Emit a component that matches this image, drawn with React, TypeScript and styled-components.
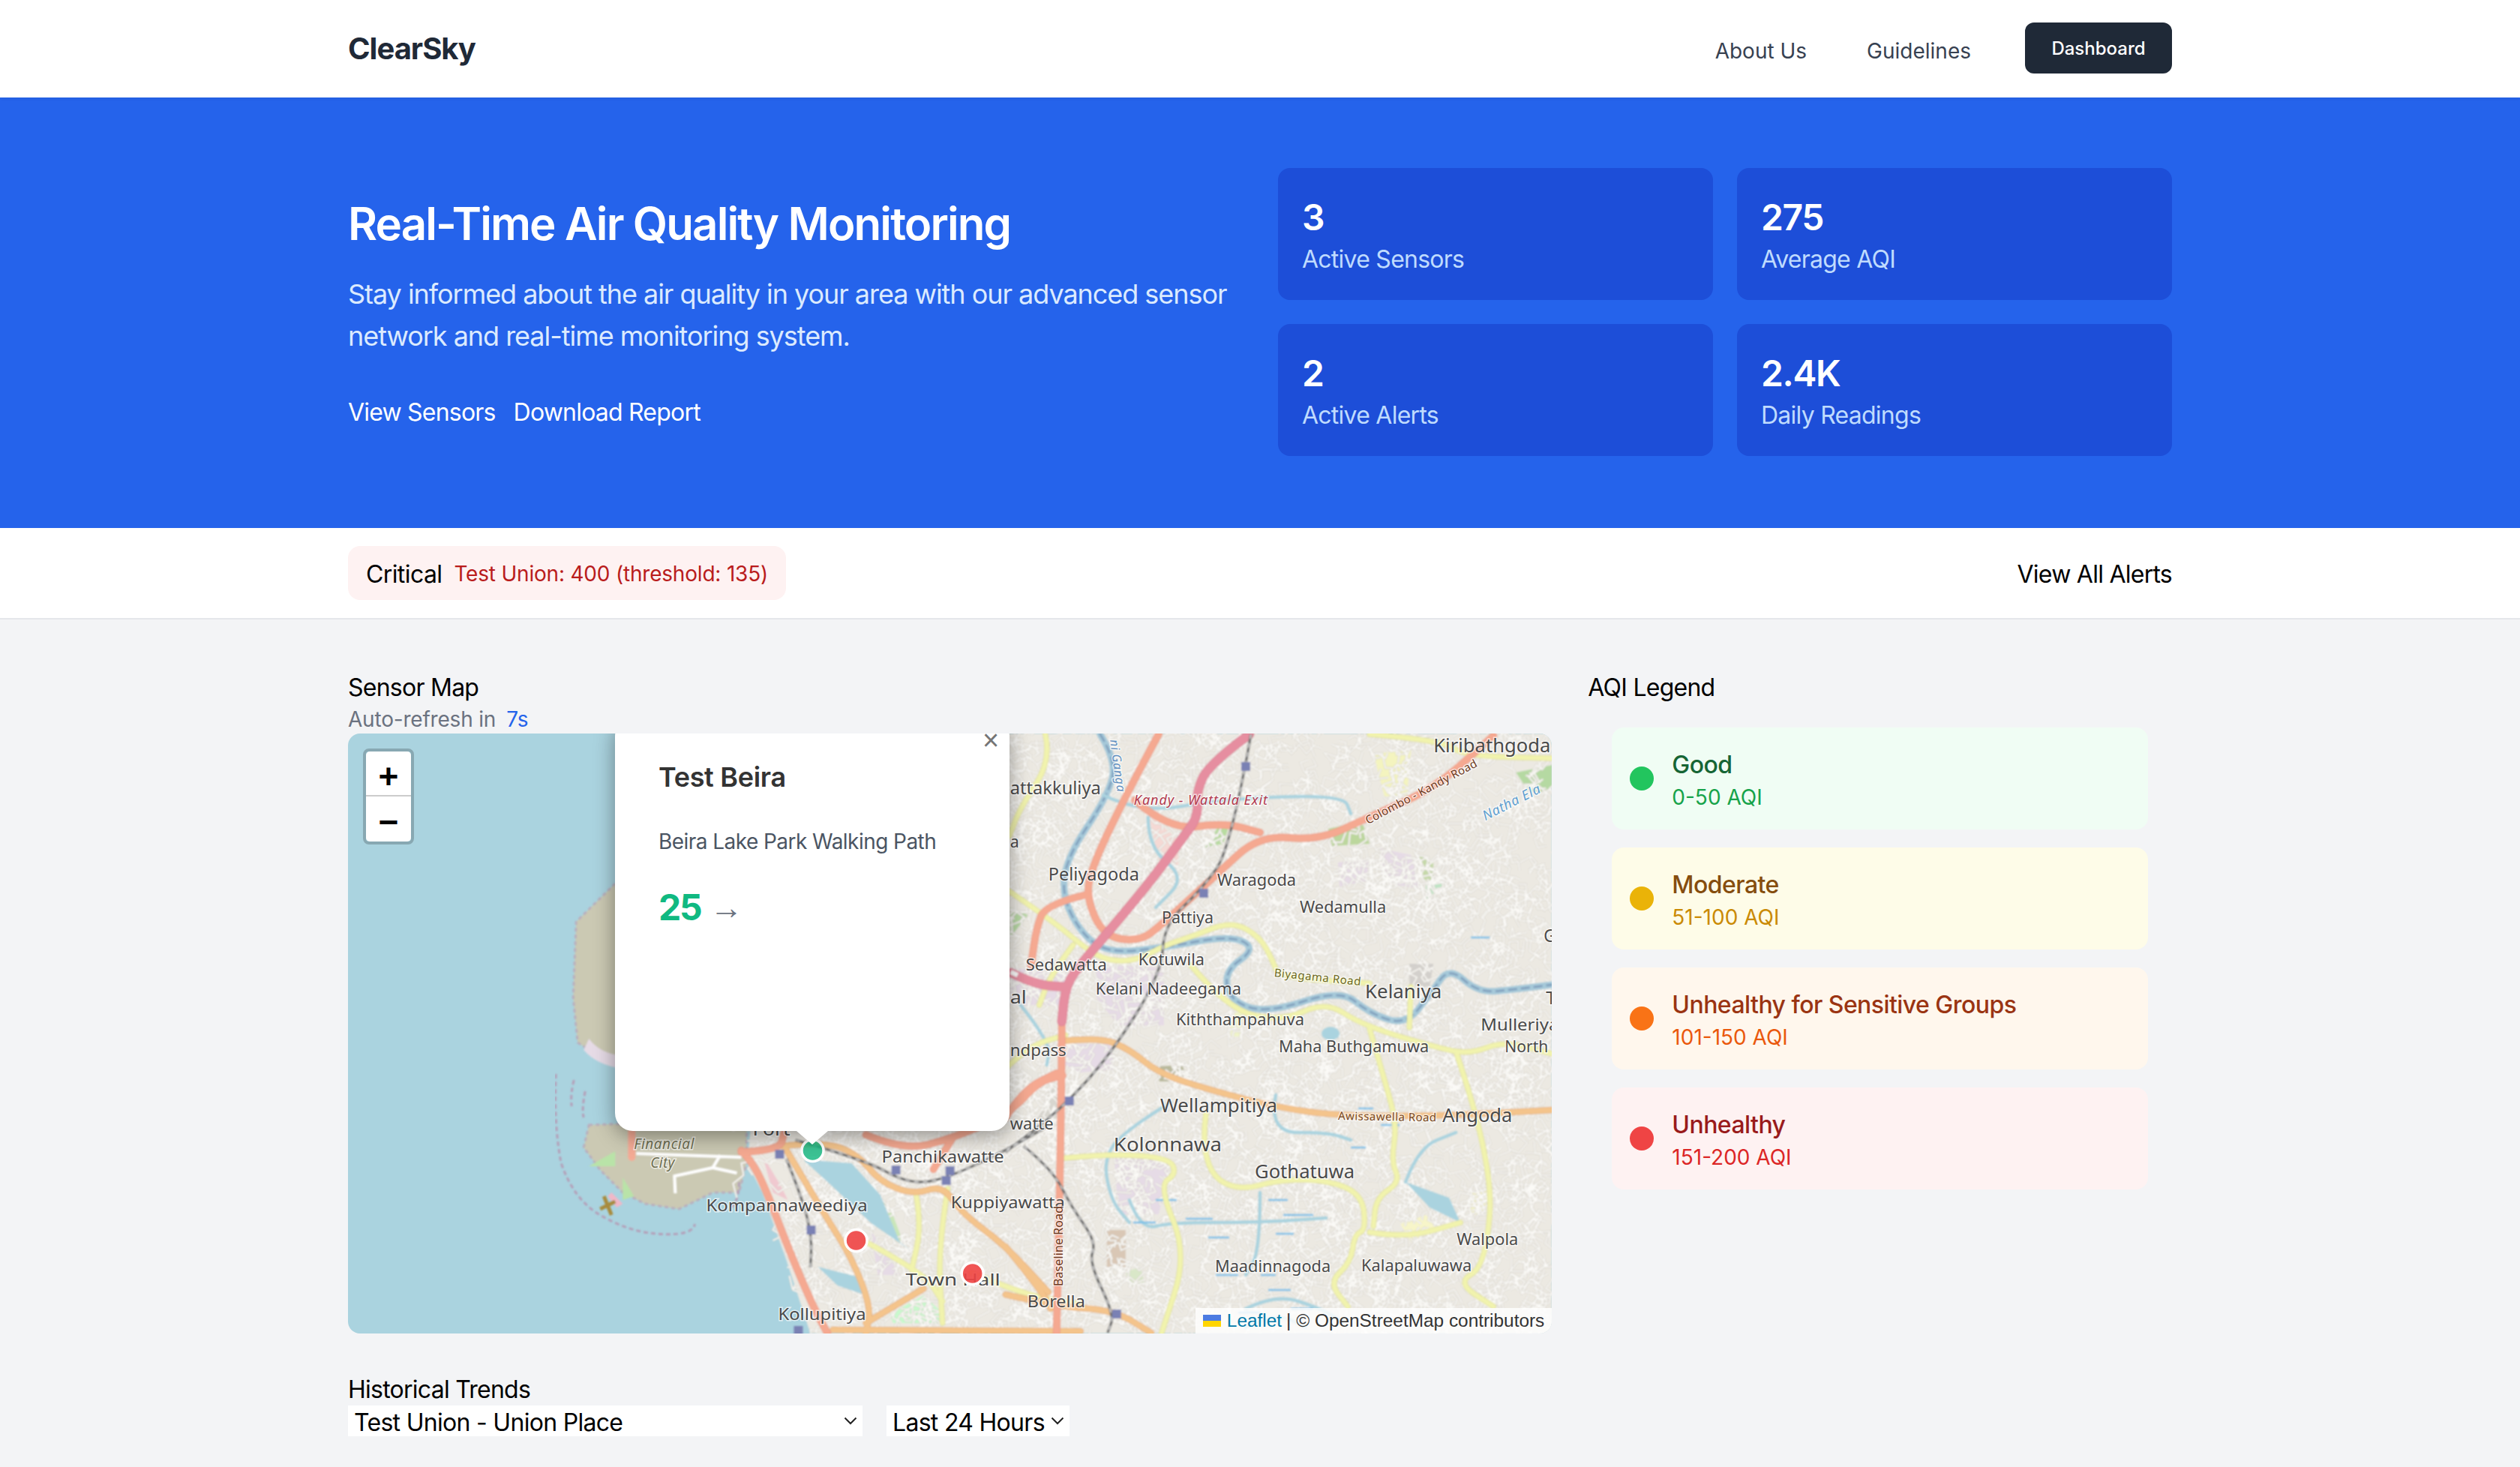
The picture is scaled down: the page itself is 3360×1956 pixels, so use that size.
import React from "react";
import styled, { createGlobalStyle } from "styled-components";

type Pt = [number, number];

const GlobalStyle = createGlobalStyle`
  html, body {
    margin: 0;
    padding: 0;
    background: #f3f4f6;
    color: #000;
    font-family: Inter, "Liberation Sans", sans-serif;
    overflow: hidden;
  }
  * { box-sizing: border-box; }
`;

const Nav = styled.nav`
  position: relative;
  z-index: 5;
  height: 130px;
  background: #fff;
  box-shadow: 0 2px 4px rgba(0, 0, 0, 0.05);
`;
const Container = styled.div`
  width: 2432px;
  margin: 0 auto;
`;
const NavInner = styled(Container)`
  height: 128px;
  display: flex;
  align-items: center;
  justify-content: space-between;
`;
const Logo = styled.div`
  font-size: 40px;
  font-weight: 700;
  letter-spacing: -1px;
  color: #1f2937;
`;
const NavLinks = styled.div`
  display: flex;
  align-items: center;
`;
const NavLink = styled.a`
  font-size: 28px;
  font-weight: 400;
  color: #374151;
  margin-right: 80px;
  padding-top: 8px;
  &:nth-child(2) { margin-right: 72px; }
`;
const DashboardButton = styled.button`
  width: 196px;
  height: 68px;
  border: 0;
  border-radius: 12px;
  background: #1f2937;
  color: #fff;
  font-family: inherit;
  font-size: 24px;
  font-weight: 500;
`;

const Hero = styled.section`
  background: #2563eb;
  padding: 94px 0 96px;
`;
const HeroGrid = styled(Container)`
  display: grid;
  grid-template-columns: 1fr 1fr;
  gap: 48px;
  align-items: center;
`;
const HeroTitle = styled.h1`
  margin: 0 0 32px;
  padding-top: 4px;
  font-size: 60px;
  line-height: 68px;
  font-weight: 600;
  letter-spacing: -1.9px;
  color: #fff;
`;
const HeroText = styled.p`
  margin: 0 0 48px;
  font-size: 36px;
  line-height: 56px;
  letter-spacing: -1.04px;
  color: #dbeafe;
`;
const HeroLinks = styled.div`
  display: flex;
  gap: 24px;
  padding-top: 4px;
  font-size: 32px;
  line-height: 44px;
  letter-spacing: -0.8px;
  color: #fff;
`;
const StatGrid = styled.div`
  display: grid;
  grid-template-columns: 580px 580px;
  gap: 32px;
`;
const StatCard = styled.div`
  height: 176px;
  padding: 32px;
  border-radius: 16px;
  background: #1d4ed8;
`;
const StatValue = styled.div`
  padding-top: 4px;
  font-size: 48px;
  line-height: 60px;
  font-weight: 600;
  letter-spacing: -1.4px;
  color: #fff;
`;
const StatLabel = styled.div`
  padding-top: 4px;
  font-size: 32px;
  line-height: 44px;
  letter-spacing: -0.75px;
  color: #bfdbfe;
`;

const AlertBar = styled.div`
  background: #fff;
  border-bottom: 2px solid #e5e7eb;
  padding: 24px 0;
`;
const AlertInner = styled(Container)`
  display: flex;
  align-items: center;
  justify-content: space-between;
`;
const AlertChip = styled.div`
  display: flex;
  align-items: center;
  gap: 16px;
  height: 72px;
  padding: 2px 24px 0;
  border-radius: 16px;
  background: #fef2f2;
`;
const AlertLevel = styled.span`
  font-size: 32px;
  letter-spacing: -0.6px;
  color: #000;
`;
const AlertMessage = styled.span`
  font-size: 28px;
  letter-spacing: -0.2px;
  color: #b91c1c;
`;
const AlertLink = styled.a`
  padding-top: 2px;
  font-size: 32px;
  letter-spacing: -0.75px;
  color: #000;
`;

const Main = styled(Container)`
  padding-top: 64px;
`;
const TopGrid = styled.div`
  display: grid;
  grid-template-columns: repeat(3, 1fr);
  gap: 48px;
`;
const MapColumn = styled.div`
  grid-column: span 2;
`;
const SectionTitle = styled.h2`
  margin: 0;
  padding-top: 5px;
  font-size: 32px;
  line-height: 43px;
  font-weight: 400;
  letter-spacing: -0.75px;
  color: #000;
`;
const RefreshLine = styled.div`
  padding-top: 2px;
  font-size: 28px;
  line-height: 38px;
  letter-spacing: -0.2px;
  color: #6b7280;
`;
const RefreshCount = styled.span`
  margin-left: 14px;
  color: #2563eb;
`;

const MapBox = styled.div`
  position: relative;
  height: 800px;
  border-radius: 16px;
  overflow: hidden;
  background: #aad3df;
`;
const MapSvg = styled.svg`
  display: block;
  width: 100%;
  height: 100%;
`;
const MapLabel = styled.text<{ $tone?: string }>`
  font-family: "Noto Sans", sans-serif;
  fill: ${({ $tone }) => $tone || "#4a4a4a"};
  stroke: rgba(255, 255, 255, 0.65);
  stroke-width: 3px;
  paint-order: stroke;
  dominant-baseline: central;
`;
const ZoomControl = styled.div`
  position: absolute;
  left: 20px;
  top: 20px;
  width: 68px;
  border: 4px solid rgba(0, 0, 0, 0.2);
  border-radius: 8px;
  background-clip: padding-box;
`;
const ZoomButton = styled.div<{ $last?: boolean }>`
  height: 60px;
  padding-top: 8px;
  display: flex;
  align-items: center;
  justify-content: center;
  background: #fff;
  color: #000;
  font-family: "Liberation Sans", sans-serif;
  font-size: 46px;
  font-weight: 700;
  border-radius: ${({ $last }) => ($last ? "0 0 5px 5px" : "5px 5px 0 0")};
  border-bottom: ${({ $last }) => ($last ? "0" : "2px solid #ccc")};
`;
const Popup = styled.div`
  position: absolute;
  left: 356px;
  top: -20px;
  width: 526px;
  height: 550px;
  padding: 20px 40px 0 58px;
  background: #fff;
  border-radius: 24px;
  box-shadow: 0 6px 28px rgba(0, 0, 0, 0.4);
`;
const PopupClose = styled.div`
  position: absolute;
  right: 10px;
  top: 11px;
  width: 30px;
  text-align: center;
  font-family: "Liberation Sans", sans-serif;
  font-size: 38px;
  line-height: 36px;
  font-weight: 400;
  color: #757575;
`;
const PopupTip = styled.div`
  position: absolute;
  left: 242px;
  bottom: -18px;
  width: 0;
  height: 0;
  border-left: 21px solid transparent;
  border-right: 21px solid transparent;
  border-top: 18px solid #fff;
`;
const PopupTitle = styled.div`
  margin-top: 30px;
  font-size: 36px;
  line-height: 56px;
  font-weight: 600;
  letter-spacing: -0.3px;
  color: #333;
`;
const PopupPlace = styled.div`
  margin-top: 38px;
  font-size: 28px;
  line-height: 40px;
  letter-spacing: -0.55px;
  color: #4b5563;
`;
const PopupReading = styled.div`
  margin-top: 40px;
  display: flex;
  align-items: center;
  gap: 12px;
`;
const PopupValue = styled.span`
  font-size: 48px;
  line-height: 56px;
  font-weight: 700;
  letter-spacing: -2.2px;
  color: #10b981;
`;
const PopupArrow = styled.span`
  font-family: "Liberation Sans", sans-serif;
  font-size: 44px;
  line-height: 56px;
  color: #6b7280;
`;
const Attribution = styled.div`
  position: absolute;
  right: 0;
  bottom: 0;
  height: 34px;
  padding: 0 10px;
  display: flex;
  align-items: center;
  gap: 6px;
  background: rgba(255, 255, 255, 0.8);
  font-family: "Liberation Sans", sans-serif;
  font-size: 24.4px;
  color: #333;
`;
const AttributionLink = styled.a`
  color: #0078a8;
`;
const FlagIcon = styled.svg`
  display: block;
  margin-right: 2px;
`;

const LegendList = styled.div`
  margin: 32px 32px 0;
  display: flex;
  flex-direction: column;
  gap: 24px;
`;
const LegendItem = styled.div<{ $bg: string }>`
  height: 136px;
  padding: 24px;
  display: flex;
  align-items: center;
  gap: 24px;
  border-radius: 16px;
  background: ${({ $bg }) => $bg};
`;
const LegendDot = styled.span<{ $color: string }>`
  width: 32px;
  height: 32px;
  border-radius: 50%;
  background: ${({ $color }) => $color};
`;
const LegendName = styled.div<{ $color: string }>`
  padding-top: 3px;
  font-size: 32px;
  line-height: 45px;
  font-weight: 500;
  letter-spacing: -0.55px;
  color: ${({ $color }) => $color};
`;
const LegendRange = styled.div<{ $color: string }>`
  padding-top: 2px;
  font-size: 28px;
  line-height: 38px;
  color: ${({ $color }) => $color};
`;

const TrendsSection = styled.section`
  margin-top: 48px;
`;
const SelectRow = styled.div`
  display: flex;
  gap: 32px;
`;
const SelectWrap = styled.div<{ $width: number }>`
  position: relative;
  width: ${({ $width }) => $width}px;
  height: 41px;
`;
const Select = styled.select`
  appearance: none;
  display: block;
  width: 100%;
  height: 100%;
  padding: 3px 0 0 8px;
  border: 0;
  border-radius: 0;
  background: #fff;
  color: #000;
  font-family: inherit;
  font-size: 32px;
  letter-spacing: -0.7px;
`;
const SelectChevron = styled.svg`
  position: absolute;
  right: 7px;
  top: 15px;
  pointer-events: none;
`;

// smooth line through points, used for all the map roads
function smooth(pts: Pt[]): string {
  let d = `M${pts[0][0]} ${pts[0][1]}`;
  for (let i = 1; i < pts.length - 1; i++) {
    const mx = (pts[i][0] + pts[i + 1][0]) / 2;
    const my = (pts[i][1] + pts[i + 1][1]) / 2;
    d += `Q${pts[i][0]} ${pts[i][1]} ${mx} ${my}`;
  }
  const last = pts[pts.length - 1];
  return d + `L${last[0]} ${last[1]}`;
}

function poly(pts: Pt[]): string {
  return pts.map(p => p.join(",")).join(" ");
}

function coastX(y: number): number {
  const c: Pt[] = [[1480, 1000], [1551, 996], [1590, 1016], [1680, 1048], [1778, 1080]];
  if (y < c[0][0]) return 1000;
  for (let i = 0; i < c.length - 1; i++) {
    if (y <= c[i + 1][0]) {
      const t = (y - c[i][0]) / (c[i + 1][0] - c[i][0]);
      return c[i][1] + t * (c[i + 1][1] - c[i][1]);
    }
  }
  return 1080;
}

// fine street texture of the tiles
function buildStreets(): string {
  let seed = 91823;
  const rnd = () => {
    seed = (seed + 0x6d2b79f5) | 0;
    let t = Math.imul(seed ^ (seed >>> 15), 1 | seed);
    t = (t + Math.imul(t ^ (t >>> 7), 61 | t)) ^ t;
    return ((t ^ (t >>> 14)) >>> 0) / 4294967296;
  };
  let d = "";
  for (let i = 0; i < 5200; i++) {
    const x = 1000 + rnd() * 1070;
    const y = 978 + rnd() * 800;
    if (x < coastX(y) + 6) continue;
    let a = rnd() * Math.PI * 2;
    let px = x;
    let py = y;
    d += `M${px.toFixed(0)} ${py.toFixed(0)}`;
    const n = 2 + Math.floor(rnd() * 4);
    for (let j = 0; j < n; j++) {
      const len = 6 + rnd() * 16;
      px += Math.cos(a) * len;
      py += Math.sin(a) * len;
      d += `L${px.toFixed(0)} ${py.toFixed(0)}`;
      a += (rnd() < 0.5 ? 1 : -1) * (Math.PI / 2) * (0.7 + rnd() * 0.4);
    }
  }
  return d;
}
const STREETS = buildStreets();

const LAND: Pt[] = [[830, 978], [2068, 978], [2068, 1778], [1080, 1778], [1048, 1680], [1016, 1590], [996, 1551], [1000, 1508], [840, 1508]];
const PORT: Pt[] = [[820, 1178], [768, 1229], [764, 1330], [770, 1390], [808, 1415], [840, 1420], [840, 1178]];
const PORT_CITY: Pt[] = [[785, 1500], [840, 1498], [995, 1505], [995, 1551], [985, 1590], [950, 1590], [930, 1600], [905, 1612], [860, 1605], [830, 1590], [800, 1560], [778, 1530]];

const LANDUSE: { c: string; p: Pt[] }[] = [
  { c: "#e6dbe6", p: [[1461, 1287], [1551, 1290], [1551, 1367], [1490, 1367], [1461, 1330]] },
  { c: "#e6dbe6", p: [[1418, 1392], [1480, 1392], [1485, 1426], [1440, 1430], [1418, 1420]] },
  { c: "#e6dbe6", p: [[1485, 1544], [1556, 1544], [1556, 1570], [1544, 1619], [1490, 1619]] },
  { c: "#e6dbe6", p: [[1839, 1131], [1880, 1140], [1893, 1185], [1860, 1180], [1839, 1160]] },
  { c: "#e6dbe6", p: [[1783, 1150], [1825, 1145], [1820, 1175], [1785, 1182]] },
  { c: "#e6dbe6", p: [[1346, 1290], [1440, 1300], [1420, 1340], [1346, 1340]] },
  { c: "#e6dbe6", p: [[1160, 1640], [1200, 1700], [1170, 1700]] },
  { c: "#d3d0cc", p: [[1878, 1285], [1910, 1285], [1905, 1316], [1878, 1316]] },
  { c: "#d8d6cf", p: [[1400, 1450], [1420, 1450], [1410, 1490], [1380, 1495]] },
  { c: "#c8facc", p: [[1186, 1752], [1231, 1727], [1253, 1748], [1253, 1764], [1190, 1764]] },
  { c: "#f4f4bf", p: [[1830, 1005], [1880, 1000], [1875, 1060], [1845, 1062]] },
  { c: "#f7f5c9", p: [[1866, 1632], [1900, 1620], [1915, 1640], [1880, 1655]] },
  { c: "#f7f5c9", p: [[1960, 1590], [1985, 1588], [1975, 1620], [1960, 1618]] },
  { c: "#bde5c4", p: [[1900, 1180], [1925, 1178], [1900, 1200]] },
  { c: "#b8dca0", p: [[1625, 1100], [1640, 1095], [1630, 1125], [1605, 1130]] },
  { c: "#bcd79d", p: [[1770, 1105], [1815, 1095], [1825, 1125], [1775, 1128]] },
  { c: "#b5d9a2", p: [[2020, 1030], [2068, 1020], [2068, 1050], [2040, 1060]] },
  { c: "#c5d9a8", p: [[1890, 1140], [1910, 1150], [1910, 1180], [1895, 1170]] },
  { c: "#b8d9a5", p: [[1346, 1210], [1370, 1220], [1346, 1250]] },
  { c: "#b9b99c", p: [[1540, 1422], [1575, 1420], [1585, 1442], [1545, 1442]] },
  { c: "#f5d9d4", p: [[1530, 1085], [1570, 1120], [1570, 1155], [1545, 1150]] },
  { c: "#d9e7c8", p: [[1500, 1695], [1520, 1690], [1525, 1712], [1505, 1715]] },
  { c: "#e8e6e0", p: [[1350, 1420], [1410, 1435], [1370, 1450], [1350, 1450]] },
  { c: "#f0f4c8", p: [[1640, 1350], [1655, 1350], [1655, 1382], [1640, 1382]] },
  { c: "#bde3c2", p: [[1110, 1565], [1128, 1575], [1120, 1590]] },
  { c: "#f0c9d0", p: [[1016, 1540], [1040, 1580], [1050, 1600], [1030, 1590]] },
  { c: "#c9e6b9", p: [[1170, 1590], [1190, 1620], [1205, 1660], [1185, 1650]] },
  { c: "#d9c7b5", p: [[1475, 1640], [1500, 1640], [1500, 1690], [1475, 1690]] },
];

const WATER: Pt[][] = [
  [[1084, 1547], [1135, 1551], [1173, 1593], [1199, 1656], [1215, 1668], [1161, 1631], [1103, 1576], [1071, 1547]],
  [[1090, 1689], [1142, 1702], [1154, 1727], [1116, 1714]],
  [[1873, 1576], [1931, 1597], [1946, 1630], [1905, 1610]],
];
const RIVERS: Pt[][] = [
  [[1466, 979], [1488, 1014], [1476, 1062], [1422, 1142], [1415, 1196], [1444, 1249], [1481, 1271], [1553, 1263], [1641, 1247], [1674, 1265], [1631, 1295], [1640, 1335], [1689, 1351], [1786, 1319], [1825, 1351], [1873, 1367], [1907, 1324], [1931, 1289], [1970, 1324], [2019, 1319], [2068, 1313]],
];
const WATERWAYS: Pt[][] = [
  [[1470, 1060], [1520, 1085], [1630, 1065], [1790, 1060], [1800, 1085]],
  [[1530, 1090], [1530, 1130], [1580, 1170], [1540, 1210]],
  [[1505, 1600], [1520, 1640], [1560, 1630], [1679, 1630], [1767, 1624]],
  [[1679, 1590], [1679, 1667], [1660, 1700]],
  [[1560, 1470], [1510, 1500], [1470, 1540], [1480, 1600], [1505, 1630]],
  [[1700, 1460], [1690, 1510], [1770, 1510], [1800, 1520]],
  [[1660, 1745], [1700, 1725], [1760, 1745], [1785, 1760]],
  [[1660, 1770], [1700, 1750], [1740, 1770]],
  [[1873, 1576], [1890, 1530], [1940, 1510]],
  [[1360, 1340], [1400, 1390], [1395, 1420]],
];

const MOTORWAY: Pt[][] = [
  [[1665, 979], [1611, 1019], [1594, 1056], [1597, 1089], [1573, 1121], [1534, 1174], [1485, 1233], [1444, 1281], [1420, 1313], [1415, 1362]],
  [[1347, 1297], [1380, 1313], [1420, 1316]],
];
const TRUNK: Pt[][] = [
  [[1415, 1362], [1415, 1388], [1413, 1549], [1408, 1778]],
  [[1544, 979], [1505, 1051], [1456, 1153], [1447, 1196], [1471, 1249], [1519, 1255], [1548, 1233], [1621, 1166], [1679, 1113], [1757, 1121], [1825, 1089], [1912, 1051], [1990, 981]],
  [[1512, 1067], [1558, 1107], [1631, 1097], [1679, 1110]],
  [[1447, 1193], [1393, 1206], [1381, 1238], [1374, 1287]],
  [[1340, 1490], [1364, 1453], [1408, 1431]],
  [[988, 1534], [1001, 1547], [1020, 1584], [1052, 1668], [1084, 1743], [1103, 1778]],
  [[988, 1536], [1039, 1534], [1045, 1510]],
  [[1154, 1513], [1205, 1534], [1269, 1518], [1346, 1484], [1384, 1442], [1416, 1434]],
  [[1244, 1559], [1269, 1518]],
];
const PRIMARY: Pt[][] = [
  [[1418, 1388], [1466, 1383], [1505, 1399], [1544, 1431], [1611, 1453], [1704, 1477], [1786, 1488], [1922, 1488], [2068, 1480]],
  [[1340, 1726], [1408, 1742], [1485, 1747], [1534, 1777]],
  [[1340, 1662], [1388, 1721], [1400, 1745]],
  [[1046, 1530], [1078, 1584], [1103, 1626], [1135, 1677], [1161, 1743], [1154, 1778]],
  [[1040, 1528], [1097, 1522], [1142, 1538], [1173, 1576], [1218, 1593], [1256, 1580], [1282, 1618], [1339, 1660], [1397, 1723]],
  [[1154, 1764], [1231, 1718]],
  [[1110, 1773], [1440, 1775]],
];
const SECONDARY: Pt[][] = [
  [[1340, 1185], [1403, 1228], [1447, 1265], [1476, 1281], [1514, 1281], [1553, 1260], [1587, 1249], [1641, 1228], [1679, 1249], [1696, 1281], [1704, 1303], [1825, 1311]],
  [[1587, 1287], [1636, 1346], [1708, 1362], [1767, 1335], [1815, 1367], [1922, 1399], [1960, 1405], [2004, 1388], [2068, 1405]],
  [[1941, 1405], [1990, 1549], [1980, 1688], [1941, 1710], [1990, 1742]],
  [[1825, 1372], [1849, 1453], [1861, 1501], [1854, 1549], [1866, 1576], [1834, 1597], [1830, 1635]],
  [[1607, 1485], [1602, 1522], [1616, 1571], [1655, 1587], [1704, 1573], [1767, 1573], [1815, 1592], [1820, 1640], [1805, 1646], [1800, 1683], [1771, 1710], [1796, 1742]],
  [[1825, 1643], [1873, 1651], [1946, 1630]],
  [[1420, 1544], [1481, 1538], [1558, 1544], [1568, 1565], [1544, 1581], [1582, 1672], [1548, 1777]],
  [[1825, 979], [1922, 987], [1951, 1008], [2068, 1011]],
  [[1393, 979], [1401, 1014], [1359, 1078], [1345, 1115]],
  [[1340, 1425], [1370, 1395], [1420, 1380]],
  [[1154, 1656], [1231, 1697], [1256, 1735]],
  [[1221, 1593], [1228, 1635], [1215, 1693]],
  [[1263, 1585], [1250, 1664], [1256, 1764]],
  [[1295, 1697], [1365, 1727], [1440, 1739]],
  [[1430, 1260], [1400, 1300], [1385, 1340]],
  [[1880, 1316], [1878, 1370]],
];
const RAIL: Pt[][] = [
  [[1667, 979], [1640, 1131], [1602, 1185], [1551, 1233], [1548, 1297], [1481, 1405], [1413, 1480], [1340, 1536]],
  [[1364, 1528], [1403, 1560], [1427, 1608], [1461, 1656], [1451, 1683], [1485, 1753], [1476, 1777]],
  [[1060, 1520], [1154, 1547], [1205, 1576], [1250, 1576], [1333, 1538], [1397, 1501]],
  [[1048, 1545], [1070, 1600], [1082, 1650], [1080, 1690]],
];
const STATIONS: Pt[] = [[1660, 1022], [1604, 1191], [1425, 1468], [1488, 1752], [1039, 1539], [1194, 1560], [1261, 1574], [1266, 1561], [1081, 1640], [1064, 1774]];

// text, x, y centre, width, font size
const PLACES: [string, number, number, number, number][] = [
  ["Kiribathgoda", 1910, 993, 156, 26],
  ["attakkuliya", 1346, 1050, 121, 23],
  ["Peliyagoda", 1397, 1165, 121, 23],
  ["Waragoda", 1622, 1172, 105, 22],
  ["Wedamulla", 1732, 1208, 115, 22],
  ["Pattiya", 1548, 1222, 69, 22],
  ["Kotuwila", 1517, 1278, 88, 22],
  ["Sedawatta", 1367, 1285, 108, 22],
  ["Kelani Nadeegama", 1460, 1317, 194, 22],
  ["Kelaniya", 1819, 1321, 102, 26],
  ["Kiththampahuva", 1567, 1358, 171, 22],
  ["Maha Buthgamuwa", 1704, 1394, 200, 22],
  ["Mulleriya", 1973, 1365, 104, 22],
  ["North", 2005, 1394, 58, 22],
  ["ndpass", 1346, 1399, 75, 22],
  ["Wellampitiya", 1546, 1473, 156, 26],
  ["Angoda", 1922, 1486, 93, 26],
  ["watte", 1346, 1497, 58, 22],
  ["Kolonnawa", 1484, 1525, 144, 26],
  ["Gothatuwa", 1672, 1561, 133, 26],
  ["Panchikawatte", 1175, 1541, 163, 22],
  ["Kuppiyawatta", 1267, 1602, 152, 22],
  ["Kompannaweediya", 941, 1606, 215, 22],
  ["Walpola", 1941, 1651, 82, 22],
  ["Kalapaluwawa", 1814, 1686, 147, 22],
  ["Maadinnagoda", 1619, 1687, 154, 22],
  ["Town Hall", 1207, 1705, 126, 22],
  ["Borella", 1369, 1734, 77, 22],
  ["Kollupitiya", 1037, 1751, 117, 22],
  ["Fort", 1003, 1505, 50, 24],
  ["G", 2057, 1247, 16, 24],
  ["T", 2060, 1330, 14, 24],
  ["a", 1346, 1121, 12, 22],
  ["al", 1346, 1329, 22, 24],
];

const LEGEND = [
  { name: "Good", range: "0-50 AQI", bg: "#f0fdf4", dot: "#22c55e", title: "#166534", sub: "#16a34a" },
  { name: "Moderate", range: "51-100 AQI", bg: "#fefce8", dot: "#eab308", title: "#854d0e", sub: "#ca8a04" },
  { name: "Unhealthy for Sensitive Groups", range: "101-150 AQI", bg: "#fff7ed", dot: "#f97316", title: "#9a3412", sub: "#ea580c" },
  { name: "Unhealthy", range: "151-200 AQI", bg: "#fef2f2", dot: "#ef4444", title: "#991b1b", sub: "#dc2626" },
];

const STATS = [
  { value: "3", label: "Active Sensors" },
  { value: "275", label: "Average AQI" },
  { value: "2", label: "Active Alerts" },
  { value: "2.4K", label: "Daily Readings" },
];

function Lines({ sets, color, width, casing }: { sets: Pt[][]; color: string; width: number; casing?: string }) {
  return (
    <g fill="none" strokeLinecap="round" strokeLinejoin="round">
      {casing && sets.map((s, i) => <path key={`c${i}`} d={smooth(s)} stroke={casing} strokeWidth={width + 1.5} />)}
      {sets.map((s, i) => <path key={i} d={smooth(s)} stroke={color} strokeWidth={width} />)}
    </g>
  );
}

function OsmMap() {
  return (
    <MapSvg viewBox="464 978 1604 800" preserveAspectRatio="none">
      <defs>
        <filter id="tileBlur" x="0" y="0" width="100%" height="100%">
          <feGaussianBlur stdDeviation="0.8" />
        </filter>
      </defs>
      <g filter="url(#tileBlur)">
        <polygon points={poly(LAND)} fill="#ece9e2" />
        <polygon points={poly(PORT)} fill="#cbc9b3" stroke="#b9aebd" strokeWidth="3" strokeDasharray="5 4" />
        <path d="M778 1400 Q795 1420 830 1425 L830 1408 Q800 1405 785 1385Z" fill="#e6dbe6" />
        <polygon points={poly(PORT_CITY)} fill="#cbc9b3" stroke="#b9aebd" strokeWidth="3" strokeDasharray="5 4" />
        <path d="M741 1432 Q738 1500 748 1551 Q765 1600 800 1620 Q850 1650 905 1645 Q925 1642 926 1632" fill="none" stroke="#b49fb8" strokeWidth="3" strokeDasharray="6 4" />
        <path d="M765 1440 Q760 1460 762 1475" fill="none" stroke="#b49fb8" strokeWidth="3" strokeDasharray="6 4" />
        <path d="M780 1455 Q775 1480 778 1490" fill="none" stroke="#b49fb8" strokeWidth="3" strokeDasharray="6 4" />
        <path d="M975 1610 Q985 1600 985 1575" fill="none" stroke="#b49fb8" strokeWidth="3" strokeDasharray="6 4" />
        <path d="M848 1538 L988 1543 M960 1540 L950 1557 L899 1568 L900 1591 M950 1557 L982 1564" fill="none" stroke="#fff" strokeWidth="4" />
        <path d="M842 1509 L842 1543" fill="none" stroke="#f4ab95" strokeWidth="10" strokeLinecap="round" />
        <polygon points="785,1555 820,1535 820,1555" fill="#b9e3a8" />
        <polygon points="830,1570 845,1595 830,1600" fill="#b9e3a8" />
        <polygon points="815,1590 830,1605 822,1610 810,1595" fill="#f0b8c8" />
        <path d="M805 1595 L815 1620 M800 1612 L820 1602" stroke="#a88b3c" strokeWidth="5" fill="none" />
        {LANDUSE.map((u, i) => <polygon key={i} points={poly(u.p)} fill={u.c} />)}
        <path d={STREETS} fill="none" stroke="#d0ccc4" strokeWidth="2.8" />
        <path d={STREETS} fill="none" stroke="#fbfaf7" strokeWidth="1.6" />
        {WATER.map((w, i) => <polygon key={i} points={poly(w)} fill="#aad3df" />)}
        <ellipse cx="1773" cy="1378" rx="12" ry="9" fill="#aad3df" />
        <g fill="none" strokeLinecap="round">
          {RIVERS.map((r, i) => <path key={i} d={smooth(r)} stroke="#a6c9d9" strokeWidth="9" />)}
          {RIVERS.map((r, i) => <path key={`d${i}`} d={smooth(r)} stroke="#7f9dbb" strokeWidth="2.5" strokeDasharray="10 7" />)}
          {WATERWAYS.map((r, i) => <path key={`w${i}`} d={smooth(r)} stroke="#aad3df" strokeWidth="4.5" />)}
        </g>
        <path d="M1510 1630h30M1540 1600h28M1580 1625h36M1610 1650h28M1690 1600h26M1700 1645h24M1710 1620h40M1620 1700h30M1690 1720h30M1720 1745h30M1650 1750h30M1840 1500h25M1810 1478h20M1800 1530h20M1960 1250h25M1680 1700h20" stroke="#77bfe8" strokeWidth="2.5" fill="none" />
        <Lines sets={SECONDARY} color="#f1f3ad" width={6} casing="#dedd9a" />
        <Lines sets={PRIMARY} color="#f4c48c" width={7} casing="#e4ae78" />
        <Lines sets={TRUNK} color="#f5a991" width={8.5} casing="#e99a84" />
        <Lines sets={MOTORWAY} color="#e68ea0" width={11} casing="#d87c91" />
        <path d={smooth([[1347, 1296], [1360, 1302]])} fill="none" stroke="#fff" strokeWidth="6" strokeDasharray="10 7" />
        <g fill="none" strokeLinecap="butt">
          {RAIL.map((r, i) => <path key={i} d={smooth(r)} stroke="#707070" strokeWidth="3.5" />)}
          {RAIL.map((r, i) => <path key={`b${i}`} d={smooth(r)} stroke="#f0f0f0" strokeWidth="1.2" strokeDasharray="6 6" />)}
        </g>
        {STATIONS.map(([x, y], i) => <rect key={i} x={x - 6} y={y - 6} width="12" height="12" fill="#7a81b4" />)}
      </g>
      {PLACES.map(([t, x, y, w, s]) => (
        <MapLabel key={t} x={x} y={y} fontSize={s} textLength={w} lengthAdjust="spacingAndGlyphs">{t}</MapLabel>
      ))}
      <MapLabel x={845} y={1525} fontSize={19} fontStyle="italic" $tone="#6f6f52" textLength={80}>Financial</MapLabel>
      <MapLabel x={867} y={1550} fontSize={19} fontStyle="italic" $tone="#6f6f52" textLength={32}>City</MapLabel>
      <MapLabel x={1511} y={1066} fontSize={18} fontStyle="italic" $tone="#b23a4e" textLength={178}>Kandy - Wattala Exit</MapLabel>
      <MapLabel x={0} y={0} fontSize={15} $tone="#6e3a22" textLength={166} transform="translate(1820 1094) rotate(-28)">Colombo - Kandy Road</MapLabel>
      <MapLabel x={0} y={0} fontSize={15} $tone="#6e6a22" textLength={116} transform="translate(1698 1296) rotate(6)">Biyagama Road</MapLabel>
      <MapLabel x={0} y={0} fontSize={15} $tone="#7a4a22" textLength={131} transform="translate(1783 1487) rotate(1)">Awissawella Road</MapLabel>
      <MapLabel x={0} y={0} fontSize={16} $tone="#6e3a22" textLength={107} transform="translate(1410 1715) rotate(-90)">Baseline Road</MapLabel>
      <MapLabel x={0} y={0} fontSize={18} fontStyle="italic" $tone="#5f9fd0" textLength={84} transform="translate(1976 1088) rotate(-27)">Natha Ela</MapLabel>
      <MapLabel x={0} y={0} fontSize={16} fontStyle="italic" $tone="#5f8fc0" textLength={70} transform="translate(1485 986) rotate(82)">ni Ganga</MapLabel>
      <circle cx="1083" cy="1534" r="14.5" fill="#10b981" fillOpacity="0.8" stroke="#fff" strokeWidth="3.5" />
      <circle cx="1141" cy="1654" r="14.5" fill="#ef4444" fillOpacity="0.9" stroke="#fff" strokeWidth="3.5" />
      <circle cx="1296" cy="1698" r="14.5" fill="#ef4444" fillOpacity="0.9" stroke="#fff" strokeWidth="3.5" />
    </MapSvg>
  );
}

export default function App() {
  return (
    <>
      <GlobalStyle />
      <Nav>
        <NavInner>
          <Logo>ClearSky</Logo>
          <NavLinks>
            <NavLink>About Us</NavLink>
            <NavLink>Guidelines</NavLink>
            <DashboardButton>Dashboard</DashboardButton>
          </NavLinks>
        </NavInner>
      </Nav>
      <Hero>
        <HeroGrid>
          <div>
            <HeroTitle>Real-Time Air Quality Monitoring</HeroTitle>
            <HeroText>
              Stay informed about the air quality in your area with our advanced sensor network and real-time monitoring system.
            </HeroText>
            <HeroLinks>
              <span>View Sensors</span>
              <span>Download Report</span>
            </HeroLinks>
          </div>
          <StatGrid>
            {STATS.map(s => (
              <StatCard key={s.label}>
                <StatValue>{s.value}</StatValue>
                <StatLabel>{s.label}</StatLabel>
              </StatCard>
            ))}
          </StatGrid>
        </HeroGrid>
      </Hero>
      <AlertBar>
        <AlertInner>
          <AlertChip>
            <AlertLevel>Critical</AlertLevel>
            <AlertMessage>Test Union: 400 (threshold: 135)</AlertMessage>
          </AlertChip>
          <AlertLink>View All Alerts</AlertLink>
        </AlertInner>
      </AlertBar>
      <Main>
        <TopGrid>
          <MapColumn>
            <SectionTitle>Sensor Map</SectionTitle>
            <RefreshLine>
              Auto-refresh in<RefreshCount>7s</RefreshCount>
            </RefreshLine>
            <MapBox>
              <OsmMap />
              <ZoomControl>
                <ZoomButton>+</ZoomButton>
                <ZoomButton $last>−</ZoomButton>
              </ZoomControl>
              <Popup>
                <PopupClose>×</PopupClose>
                <PopupTitle>Test Beira</PopupTitle>
                <PopupPlace>Beira Lake Park Walking Path</PopupPlace>
                <PopupReading>
                  <PopupValue>25</PopupValue>
                  <PopupArrow>→</PopupArrow>
                </PopupReading>
                <PopupTip />
              </Popup>
              <Attribution>
                <FlagIcon width="24" height="16" viewBox="0 0 12 8">
                  <rect width="12" height="4" fill="#4c7be1" />
                  <rect y="4" width="12" height="4" fill="#ffd500" />
                </FlagIcon>
                <AttributionLink>Leaflet</AttributionLink>
                <span>| © OpenStreetMap contributors</span>
              </Attribution>
            </MapBox>
          </MapColumn>
          <div>
            <SectionTitle>AQI Legend</SectionTitle>
            <LegendList>
              {LEGEND.map(l => (
                <LegendItem key={l.name} $bg={l.bg}>
                  <LegendDot $color={l.dot} />
                  <div>
                    <LegendName $color={l.title}>{l.name}</LegendName>
                    <LegendRange $color={l.sub}>{l.range}</LegendRange>
                  </div>
                </LegendItem>
              ))}
            </LegendList>
          </div>
        </TopGrid>
        <TrendsSection>
          <SectionTitle>Historical Trends</SectionTitle>
          <SelectRow>
            <SelectWrap $width={686}>
              <Select defaultValue="union">
                <option value="union">Test Union - Union Place</option>
              </Select>
              <SelectChevron width="18" height="11" viewBox="0 0 18 11" fill="none" stroke="#222" strokeWidth="2">
                <polyline points="1.5,1.5 9,9 16.5,1.5" />
              </SelectChevron>
            </SelectWrap>
            <SelectWrap $width={244}>
              <Select defaultValue="24">
                <option value="24">Last 24 Hours</option>
              </Select>
              <SelectChevron width="18" height="11" viewBox="0 0 18 11" fill="none" stroke="#222" strokeWidth="2">
                <polyline points="1.5,1.5 9,9 16.5,1.5" />
              </SelectChevron>
            </SelectWrap>
          </SelectRow>
        </TrendsSection>
      </Main>
    </>
  );
}
